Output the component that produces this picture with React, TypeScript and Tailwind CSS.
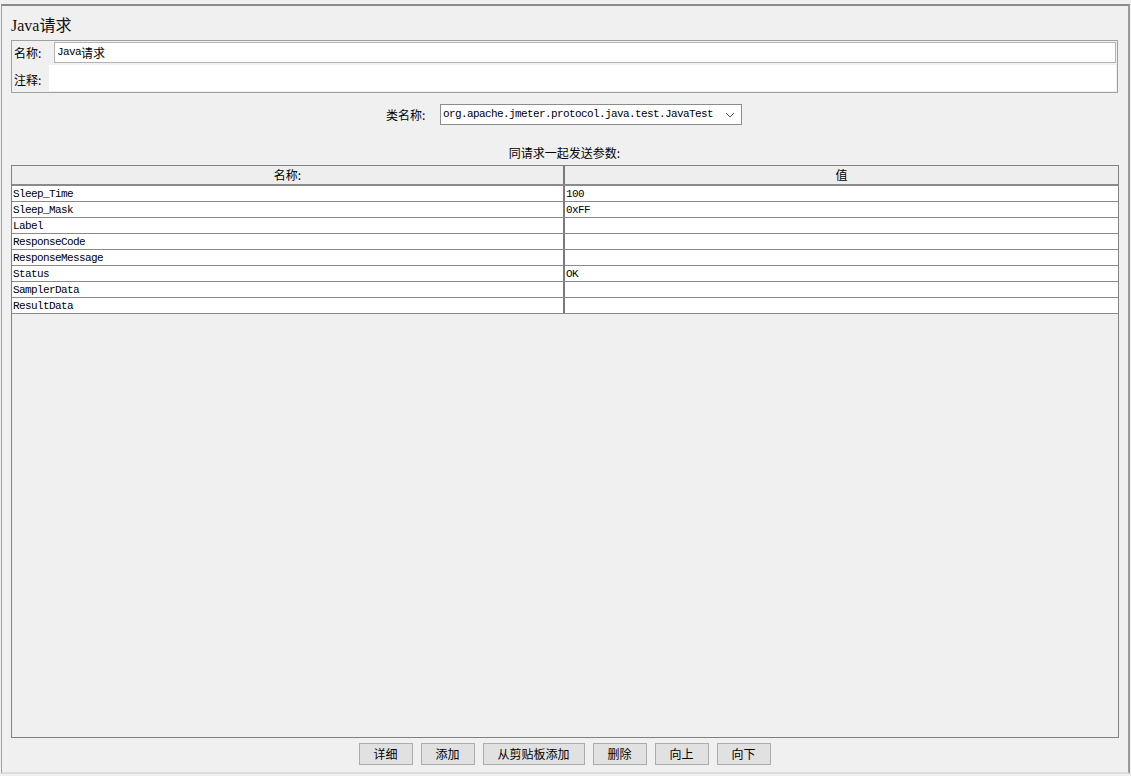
import React from "react";

const rows: [string, string][] = [
  ["Sleep_Time", "100"],
  ["Sleep_Mask", "0xFF"],
  ["Label", ""],
  ["ResponseCode", ""],
  ["ResponseMessage", ""],
  ["Status", "OK"],
  ["SamplerData", ""],
  ["ResultData", ""],
];

const cjk = { fontFamily: '"Noto Sans CJK SC", "Noto Sans", sans-serif' };
const mono = { fontFamily: '"Liberation Mono", "Noto Sans CJK SC", monospace' };

function Btn({ label, w }: { label: string; w: string }) {
  return (
    <div
      className={`${w} h-[22px] flex items-center justify-center border border-[#adadad] bg-[#e1e1e1] text-[12px] text-black`}
      style={cjk}
    >
      {label}
    </div>
  );
}

export default function App() {
  return (
    <div className="w-[1131px] h-[776px] bg-[#f0f0f0] pt-[4px] overflow-hidden">
      <div className="w-[1129px] ml-[1px] h-[770px] border-t-2 border-l border-r-2 border-t-[#8a8a8a] border-l-[#a0a0a0] border-r-[#9a9a9a] border-b-2 border-b-[#dcdcdc] flex flex-col pl-[9px] pr-[10px]">
        {/* Title */}
        <div className="h-[34px] pt-[10px] text-[16px] leading-[20px] text-[#111]" style={{ fontFamily: '"Liberation Serif", "Noto Sans CJK SC", serif' }}>
          Java请求
        </div>
        {/* Name / comment box */}
        <div className="h-[53px] border border-[#a0a0a0] flex flex-col p-[1px]">
          <div className="h-[22px] flex items-center">
            <div className="w-[41px] pl-[1px] text-[12px] text-black" style={cjk}>名称:</div>
            <div className="flex-1 h-[21px] border border-[#b4b4b4] bg-white flex items-center pl-[2px] text-[12px] text-black">
              <span style={mono} className="text-[11px] tracking-[-0.6px]">Java</span>
              <span style={cjk}>请求</span>
            </div>
          </div>
          <div className="h-[3px]" />
          <div className="h-[26px] flex items-center">
            <div className="w-[36px] pl-[1px] pt-[4px] text-[12px] text-black" style={cjk}>注释:</div>
            <div className="flex-1 h-[26px] bg-white" />
          </div>
        </div>
        {/* Class name combo */}
        <div className="mt-[11px] h-[21px] flex items-center">
          <div className="w-[375px]" />
          <div className="w-[54px] text-[12px] text-black" style={cjk}>类名称:</div>
          <div className="w-[302px] h-[21px] border border-[#8c8c8c] bg-white flex items-center pl-[2px] pr-[6px]">
            <span className="flex-1 text-[11px] tracking-[-0.6px] text-black" style={mono}>org.apache.jmeter.protocol.java.test.JavaTest</span>
            <svg width="10" height="6" viewBox="0 0 10 6">
              <path d="M1 1 L5 5 L9 1" stroke="#555" strokeWidth="1" fill="none" />
            </svg>
          </div>
        </div>
        {/* Section label */}
        <div className="h-[40px] pt-[20px] text-center text-[12px] leading-[16px] text-black" style={cjk}>
          同请求一起发送参数:
        </div>
        {/* Table */}
        <div className="h-[573px] w-[1108px] border border-[#828282] bg-[#f0f0f0] flex flex-col">
          <div className="h-[20px] flex bg-[#eeeeee] border-b-2 border-[#8a8a8a]">
            <div className="w-[553px] border-r-2 border-[#7a7a7a] flex items-center justify-center text-[12px] text-black" style={cjk}>
              名称:
            </div>
            <div className="flex-1 flex items-center justify-center text-[12px] text-black" style={cjk}>
              值
            </div>
          </div>
          {rows.map(([k, v]) => (
            <div key={k} className="h-[16px] flex bg-white border-b border-[#8a8a8a]">
              <div className="w-[553px] border-r-2 border-[#7a7a7a] pl-[1px] pt-[1px] text-[11px] tracking-[-0.6px] leading-[15px] text-black" style={mono}>
                {k}
              </div>
              <div className="flex-1 pl-[1px] pt-[1px] text-[11px] tracking-[-0.6px] leading-[15px] text-black" style={mono}>
                {v}
              </div>
            </div>
          ))}
        </div>
        {/* Buttons */}
        <div className="mt-[5px] flex justify-center gap-[8px]">
          <Btn label="详细" w="w-[54px]" />
          <Btn label="添加" w="w-[54px]" />
          <Btn label="从剪贴板添加" w="w-[102px]" />
          <Btn label="删除" w="w-[54px]" />
          <Btn label="向上" w="w-[54px]" />
          <Btn label="向下" w="w-[54px]" />
        </div>
      </div>
    </div>
  );
}
